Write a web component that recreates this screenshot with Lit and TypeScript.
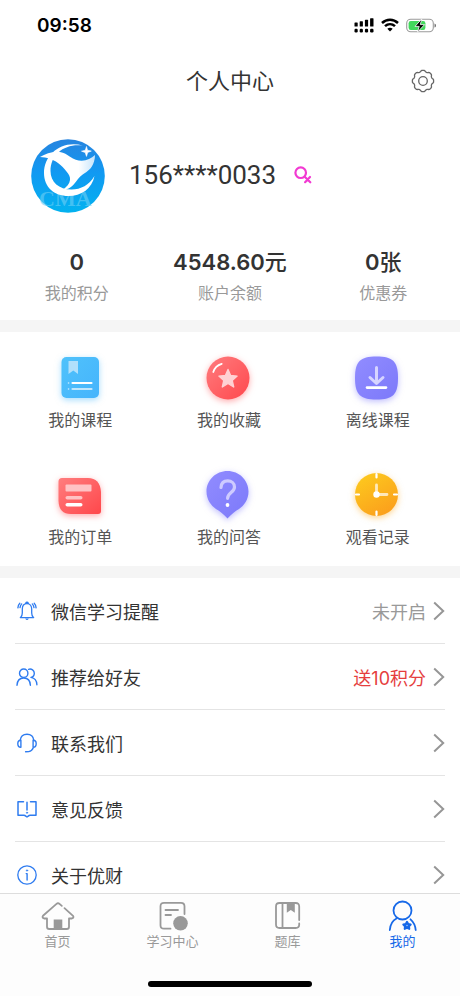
import { LitElement, html, css, svg, nothing, TemplateResult } from "lit";
import { customElement } from "lit/decorators.js";
import { classMap } from "lit/directives/class-map.js";

/** Outline of a cog with softly rounded teeth, centred on 12,12. */
const cogPath = (teeth: number, radius: number, depth: number): string => {
  const steps = 96;
  const points = Array.from({ length: steps }, (_, i) => {
    const a = (i / steps) * Math.PI * 2;
    const wave = Math.max(-0.9, Math.min(0.4, Math.cos(teeth * a)));
    const r = radius + depth * wave;
    return `${(12 + r * Math.sin(a)).toFixed(2)} ${(12 - r * Math.cos(a)).toFixed(2)}`;
  });
  return `M${points.join("L")}Z`;
};

const icons = {
  signal: svg`<svg width="20" height="15" viewBox="0 0 20 15" fill="#000" aria-hidden="true">
    <rect x="0.5" y="4.4" width="3.2" height="4.2" rx=".6"/><rect x="5.7" y="3.2" width="3.2" height="5.4" rx=".6"/>
    <rect x="10.9" y="1.8" width="3.2" height="6.8" rx=".6"/><rect x="16.1" y="0.2" width="3.4" height="8.4" rx=".6"/>
    <rect x="0.5" y="10.8" width="3.2" height="3.6" rx="1.2"/><rect x="5.7" y="10.8" width="3.2" height="3.6" rx="1.2"/>
    <rect x="10.9" y="10.8" width="3.2" height="3.6" rx="1.2"/><rect x="16.1" y="10.8" width="3.4" height="3.6" rx="1.2"/></svg>`,
  wifi: svg`<svg width="18" height="14" viewBox="0 0 18 14" fill="none" stroke="#000" stroke-width="2.5" aria-hidden="true">
    <path d="M1 5C5.6.6 12.400.6 17 5"/><path d="M4 8.200c2.900-2.700 7.100-2.700 10 0"/>
    <path d="M6.300 10.700Q9 8.600 11.700 10.700L9 13.600Z" fill="#000" stroke="none"/></svg>`,
  battery: svg`<svg width="31" height="15" viewBox="0 0 31 15" aria-hidden="true">
    <rect x=".7" y="1.200" width="26.600" height="12.600" rx="4" fill="#fff" stroke="#9b9b9b" stroke-width="1.100"/>
    <rect x="2.600" y="3.100" width="16.800" height="8.800" rx="2.200" fill="#42d85c"/>
    <path d="M28.600 5.400v4.200c1.700-.6 1.700-3.600 0-4.200z" fill="#555"/>
    <path d="M15.800.9 9 8.400h4.200l-1.700 5.700L18.600 6.600h-4.300z" fill="#000" stroke="#fff" stroke-width=".8"/></svg>`,
  gear: svg`<svg width="24" height="24" viewBox="0 0 24 24" fill="none" stroke="#666" stroke-width="1.300" stroke-linejoin="round" aria-hidden="true">
    <path d=${cogPath(8, 10.2, 1)}/><circle cx="12" cy="12" r="4.300"/></svg>`,
  logo: svg`<svg width="74" height="74" viewBox="0 0 74 74" role="img" aria-label="CMA">
    <defs><linearGradient id="sky" x1="0" y1="0" x2="0" y2="1"><stop offset="0" stop-color="#2784df"/><stop offset=".45" stop-color="#1199f2"/><stop offset="1" stop-color="#03b2ef"/></linearGradient>
    <linearGradient id="wing" x1="0" y1="0" x2="1" y2="0"><stop offset="0" stop-color="#fff"/><stop offset=".7" stop-color="#fff"/><stop offset="1" stop-color="#c6e4fb"/></linearGradient></defs>
    <circle cx="37" cy="37" r="36.800" fill="url(#sky)"/>
    <text x="8" y="67" class="mark">CMA</text>
    <path d="M52 6.500C31 .5 13 15 13 34c0 14 10 23 24.500 23C50 57 61 50 63.500 37 58 46 50 50.500 40.500 50.500 28 50.500 19.500 43 19.500 32 19.500 15 34 4 52 6.500Z" fill="#fff"/>
    <path d="M9 18C15 14.500 22 12 29 13c4 .8 7 2.600 10 4.700 4 2.800 7.500 4 11.700 4C56 21.500 60.500 19 64 16c0 4.500-1.200 8.500-3.300 11.700C57.500 32.500 53 34 49 37.700c-3 3-4.500 6-7 8.500-2.500 2.600-6 4.300-10.500 5C36 47.500 38.500 45 39 41c.4-3.200-1-5.800-3.300-8.300C33 29 30.500 26.500 27 24c-5.500-4-11-5.500-18-6Z" fill="url(#wing)"/>
    <path d="M55.500 7.500l1 3.700 3.800.9-3.600 1.300-1.200 4-1.300-3.900-3.700-1.300 3.800-1z" fill="#fff" stroke="#fff" stroke-width=".6"/></svg>`,
  female: svg`<svg width="18" height="18" viewBox="0 0 18 18" fill="none" stroke="#f23ad2" stroke-width="2.200" stroke-linecap="round" role="img" aria-label="女">
    <circle cx="6.700" cy="6.700" r="5.300"/><path d="m10.700 10.700 5.600 5.600M16 11l-4.900 5.200"/></svg>`,
  course: svg`<svg width="50" height="50" viewBox="0 0 50 50" class="blue" aria-hidden="true">
    <defs><linearGradient id="gb" x1="0" y1="0" x2="1" y2="1"><stop stop-color="#50c2fb"/><stop offset="1" stop-color="#45b4fc"/></linearGradient></defs>
    <rect x="6.500" y="4" width="37.500" height="41" rx="5" fill="url(#gb)"/>
    <path d="M13.500 8H23v13l-4.700-3.600L13.500 21z" fill="#b2e0fb"/>
    <g stroke="#fff" stroke-width="2.200" stroke-linecap="round"><path d="M17.500 30h19"/><path d="M17.500 36h19" opacity=".65"/><path d="M13.500 30h.1M13.500 36h.1" stroke-width="1.600" opacity=".7"/></g></svg>`,
  favorite: svg`<svg width="50" height="50" viewBox="0 0 50 50" class="red" aria-hidden="true">
    <defs><linearGradient id="gr" x1="0" y1="0" x2="1" y2="1"><stop stop-color="#ff7c7e"/><stop offset="1" stop-color="#ff484d"/></linearGradient></defs>
    <circle cx="24" cy="25" r="21.500" fill="url(#gr)"/>
    <path d="m24 16.500 2.600 6 6.500.6-4.900 4.400 1.500 6.500-5.700-3.500-5.700 3.500 1.500-6.500-4.900-4.400 6.500-.6z" fill="#ffd1d3" stroke="#ffd1d3" stroke-width="1.400" stroke-linejoin="round"/>
    <path d="M9.300 19q1.800-6.200 8.400-8.200" fill="none" stroke="#fff" stroke-width="1.800" stroke-linecap="round"/></svg>`,
  download: svg`<svg width="50" height="50" viewBox="0 0 50 50" class="violet" aria-hidden="true">
    <defs><linearGradient id="gv" x1="0" y1="0" x2="1" y2="1"><stop stop-color="#918cff"/><stop offset="1" stop-color="#7c79fa"/></linearGradient></defs>
    <path d="M23.500 3.500C40 3.500 45 8.500 45 25S40 46.500 23.500 46.500 2 41.500 2 25 7 3.500 23.500 3.500Z" fill="url(#gv)"/>
    <path d="M23.500 14.500v15M17 24.500l6.500 6 6.500-6" fill="none" stroke="#d6d4ff" stroke-width="3" stroke-linecap="round" stroke-linejoin="round"/>
    <path d="M14 34.600h19" stroke="#fff" stroke-width="2.600" stroke-linecap="round"/></svg>`,
  order: svg`<svg width="50" height="50" viewBox="0 0 50 50" class="red" aria-hidden="true">
    <defs><linearGradient id="go" x1="0" y1="0" x2="1" y2="1"><stop stop-color="#ff7d7e"/><stop offset="1" stop-color="#ff474b"/></linearGradient></defs>
    <path d="M7 8h26q12 0 13 14v19q0 3-3 3H16Q4 44 3.500 31V11.500Q3.500 8 7 8Z" fill="url(#go)"/>
    <rect x="10.500" y="14.500" width="26" height="7" rx="1" fill="#ffc2c4"/><rect x="10.500" y="26" width="17" height="3.600" rx="1.800" fill="#ffc2c4"/>
    <rect x="10.500" y="33" width="17" height="3.600" rx="1.800" fill="#fff"/></svg>`,
  question: svg`<svg width="50" height="50" viewBox="0 0 50 50" class="violet" aria-hidden="true">
    <defs><linearGradient id="gq" x1="0" y1="0" x2="1" y2="1"><stop stop-color="#918cff"/><stop offset="1" stop-color="#7c79fa"/></linearGradient></defs>
    <path d="M23.500 1C35 1 44.500 10 44.500 21.500c0 8-4.500 14-9.500 17.500-4 2-7.500 5.500-11.500 9.500-4-4-7.500-7.500-11.500-9.500-5-3.500-9.500-9.500-9.500-17.500C2.500 10 12 1 23.500 1Z" fill="url(#gq)"/>
    <path d="M17 17.500c.3-4.600 3-6.600 6.700-6.600 4 0 6.800 2.500 6.800 6 0 5.700-6.900 5.600-6.900 11.400" fill="none" stroke="#cecbff" stroke-width="3.200" stroke-linecap="round"/>
    <circle cx="23.500" cy="35" r="1.900" fill="#fff"/></svg>`,
  history: svg`<svg width="50" height="50" viewBox="0 0 50 50" class="amber" aria-hidden="true">
    <defs><linearGradient id="gh" x1=".2" y1="0" x2=".8" y2="1"><stop stop-color="#fdc91e"/><stop offset="1" stop-color="#fb9d1c"/></linearGradient></defs>
    <circle cx="23.500" cy="24.500" r="21.500" fill="url(#gh)"/>
    <g stroke="#fff" stroke-linecap="round"><path d="M23.500 4V7.500M23.500 41.500v3.500M3 24.500h3M41 24.500h3" stroke-width="2.200"/>
    <path d="M23.500 24.500V15M23.500 24.500H34" stroke-width="2.800" opacity=".7"/></g><circle cx="23.500" cy="24.500" r="3.200" fill="#fff"/></svg>`,
  bell: svg`<svg width="20" height="20" viewBox="0 0 20 20" class="line" aria-hidden="true">
    <path d="M3.300 16.600h13.400M3.600 16.500Q5.300 14.800 5.300 12V8.300C5.300 4.900 7.200 2.700 10 2.700s4.700 2.200 4.700 5.600V12q0 2.800 1.700 4.500M2.800 2.300Q1.100 4 .9 6.900M4.700 2.900Q3.400 4.200 3 6.600M17.200 2.300q1.700 1.700 1.900 4.600M15.300 2.900q1.300 1.300 1.700 3.700" stroke-width="1.300"/>
    <path d="M8.600 2.400q1.400-2.300 2.800 0z" fill="#2f7cf0"/><path d="M8.100 17.600h3.800q-1.900 3-3.800 0z" fill="#2f7cf0" stroke="none"/></svg>`,
  friends: svg`<svg width="22" height="20" viewBox="0 0 22 20" class="line" aria-hidden="true">
    <circle cx="7.700" cy="6.200" r="4.200"/><path d="M1 18.300C1.200 13.600 3.700 11 7.700 11s6.500 2.600 6.700 7.300"/>
    <path d="M12.600 2.300c3-.9 5.700 1.200 5.700 4 0 2.100-1.300 3.700-3.300 4.100 3.600.6 5.700 3.100 5.900 7.300"/></svg>`,
  headset: svg`<svg width="20" height="20" viewBox="0 0 20 20" class="line" aria-hidden="true">
    <path d="M3.200 7.400C3.700 3.400 6.500 1.300 10 1.300s6.300 2.100 6.800 6.100"/>
    <path d="M3.900 7.300C1.800 7.300.8 8.800.8 10.800s1 3.500 3.100 3.500zM16.100 7.300c2.100 0 3.100 1.500 3.100 3.500s-1 3.500-3.100 3.500zM16.400 14.400q-1.300 3.400-4.600 4.200l-3.200.1"/></svg>`,
  feedback: svg`<svg width="20" height="20" viewBox="0 0 20 20" class="line" aria-hidden="true">
    <path d="M6.500 2.700H1v13.500h5.800q1.300 0 2 1l1.200.8 1.200-.8q.7-1 2-1H19V2.700h-5.500M10 3.200v7.800" stroke-width="1.500"/>
    <circle cx="10" cy="13.700" r=".7" fill="#2f7cf0" stroke-width=".5"/></svg>`,
  info: svg`<svg width="20" height="20" viewBox="0 0 20 20" class="line" aria-hidden="true">
    <circle cx="10" cy="10" r="9.200" stroke-width="1.300"/><path d="M9.200 8.600h.9v6.400"/><circle cx="10" cy="5.500" r=".8" fill="#2f7cf0" stroke-width=".4"/></svg>`,
  chevron: svg`<svg width="12" height="20" viewBox="0 0 12 20" fill="none" stroke="#969696" stroke-width="2" aria-hidden="true"><path d="m1.200 1.500 9 8.500-9 8.500"/></svg>`,
  home: svg`<svg width="34" height="30" viewBox="0 0 34 30" class="tabline" aria-hidden="true">
    <path d="m20.800 4.900-2.300-2q-1.500-1.300-3 0L2 14.800q-1.300 1.900 1.100 2.700H6v8.200q0 2.300 2.300 2.300h17.400q2.300 0 2.300-2.300v-8.200h2.900q2.400-.8 1.100-2.700l-8.500-7.600"/>
    <path d="M12.700 18.600h8.600V29h-8.600z" fill="currentColor" stroke="none"/></svg>`,
  study: svg`<svg width="30" height="30" viewBox="0 0 30 30" class="tabline" aria-hidden="true">
    <path d="M12.500 27.700H6q-3.500 0-3.500-3.500V5.300q0-3.500 3.500-3.500h17q3.500 0 3.500 3.500V13"/><path d="M7.500 9H20M7.500 14H13"/>
    <circle cx="22.500" cy="22.300" r="7.300" fill="currentColor" stroke="none"/></svg>`,
  bank: svg`<svg width="30" height="30" viewBox="0 0 30 30" class="tabline" aria-hidden="true">
    <path d="M26.200 19V5.500q0-3.500-3.500-3.500H6.500Q3 2 3 5.500v18Q3 27 6.500 27h16.200q3.500 0 3.500-3.500v-1M9.500 2v25"/>
    <path d="M13.800 2.500h8v9.300l-4-2.700-4 2.700z" fill="currentColor" stroke="none"/></svg>`,
  mine: svg`<svg width="30" height="32" viewBox="0 0 30 32" class="tabline" aria-hidden="true">
    <circle cx="14.500" cy="10.500" r="9"/><path d="M8.500 18.500Q2.500 21.500 1.800 30M22.500 19.300q4.700 4.200 5.200 10.700"/>
    <path d="m19 21.800 1.200 2.200 2.500.5-1.700 1.900.3 2.500-2.300-1-2.300 1 .3-2.500-1.700-1.900 2.500-.5z" fill="currentColor" stroke-width="2"/>
    <circle cx="19" cy="25.500" r=".8" fill="#9cc4fa" stroke="none"/></svg>`,
};
type IconName = keyof typeof icons;

interface Row { label: string; icon: IconName; note?: string; hot?: boolean }

const stats = [
  { value: "0", unit: "", label: "我的积分" },
  { value: "4548.60", unit: "元", label: "账户余额" },
  { value: "0", unit: "张", label: "优惠券" },
];
const shortcuts: { label: string; icon: IconName }[] = [
  { label: "我的课程", icon: "course" },
  { label: "我的收藏", icon: "favorite" },
  { label: "离线课程", icon: "download" },
  { label: "我的订单", icon: "order" },
  { label: "我的问答", icon: "question" },
  { label: "观看记录", icon: "history" },
];
const rows: Row[] = [
  { label: "微信学习提醒", icon: "bell", note: "未开启" },
  { label: "推荐给好友", icon: "friends", note: "送10积分", hot: true },
  { label: "联系我们", icon: "headset" },
  { label: "意见反馈", icon: "feedback" },
  { label: "关于优财", icon: "info" },
];
const tabs: { label: string; icon: IconName; active?: boolean }[] = [
  { label: "首页", icon: "home" },
  { label: "学习中心", icon: "study" },
  { label: "题库", icon: "bank" },
  { label: "我的", icon: "mine", active: true },
];

@customElement("app-root")
export class AppRoot extends LitElement {
  static styles = css`
    :host {
      display: flex; flex-direction: column; height: 100vh; overflow: hidden;
      background: #fff; color: #333;
      font-family: Inter, "Noto Sans CJK SC", sans-serif;
    }
    * { box-sizing: border-box; }
    svg { display: block; flex: none; }
    a { color: inherit; text-decoration: none; }
    .status { flex: none; display: flex; align-items: center; justify-content: space-between; height: 50px; padding: 0 23px 0 37px; }
    .clock { font-size: 19px; font-weight: 600; line-height: 25px; color: #000; }
    .signals { display: flex; align-items: center; gap: 7px; }
    .nav { flex: none; display: grid; grid-template-columns: 1fr auto 1fr; align-items: center; height: 62px; padding: 0 25px; }
    .title { grid-column: 2; margin: 0; font-size: 22px; font-weight: 400; line-height: 32px; }
    .settings { justify-self: end; border: 0; padding: 0; background: none; cursor: pointer; }
    .content { flex: 1; min-height: 0; overflow: hidden; }
    .profile { display: flex; align-items: center; gap: 24px; padding: 27px 31px 0; }
    .mark { font: 700 22px "Liberation Serif", serif; fill: #6fd0f5; fill-opacity: .6; }
    .user { display: flex; align-items: center; gap: 18px; padding-bottom: 2px; font-family: Roboto, sans-serif; font-size: 26px; line-height: 32px; }
    .stats { display: grid; grid-template-columns: repeat(3, 1fr); margin: 0; padding: 32px 0 13px; text-align: center; }
    .stat { display: flex; flex-direction: column-reverse; }
    .value { margin: 0; font-size: 22px; font-weight: 600; line-height: 34px; }
    .unit { font-weight: 500; }
    .caption { font-size: 16px; line-height: 28px; color: #999; }
    .band { height: 12px; background: #f5f5f5; }
    .shortcuts { display: grid; grid-template-columns: repeat(3, 1fr); row-gap: 38px; padding: 21px 8px 17px 6px; }
    .shortcut { display: flex; flex-direction: column; align-items: center; gap: 5px; font-size: 16px; line-height: 24px; color: #555; }
    .blue { filter: drop-shadow(0 2px 3px #4bbafc80); }
    .red { filter: drop-shadow(0 2px 3px #ff5a5e80); }
    .violet { filter: drop-shadow(0 2px 3px #817dfc80); }
    .amber { filter: drop-shadow(0 2px 3px #fca92080); }
    .rows { list-style: none; margin: 0; padding: 0 15px; }
    .row { display: flex; align-items: center; height: 66px; font-size: 18px; border-bottom: 1px solid #e4e4e4; }
    .rowicon { display: flex; justify-content: center; width: 24px; margin-right: 12px; }
    .note { margin-left: auto; margin-right: 7px; color: #999; }
    .hot { color: #e53e3e; }
    .tail { margin-left: auto; }
    .note + .tail { margin-left: 0; }
    .line { fill: none; stroke: #2f7cf0; stroke-width: 1.4; stroke-linecap: round; stroke-linejoin: round; }
    .tabs { flex: none; border-top: 1px solid #ddd; background: #fdfdfd; }
    .tablist { display: grid; grid-template-columns: repeat(4, 1fr); padding-top: 6px; }
    .tab { display: flex; flex-direction: column; align-items: center; font-size: 13px; line-height: 18px; color: #999; }
    .tabicon { display: flex; align-items: center; height: 32px; }
    .active { color: #1769e8; }
    .tabline { fill: none; stroke: currentColor; stroke-width: 1.8; stroke-linecap: round; stroke-linejoin: round; }
    .homebar { width: 164px; height: 6px; margin: 31px auto 9px; border-radius: 3px; background: #000; }
  `;

  private row({ label, icon, note, hot }: Row): TemplateResult {
    return html`<li><a class="row" href="#">
      <span class="rowicon">${icons[icon]}</span><span>${label}</span>
      ${note ? html`<span class=${classMap({ note: true, hot: !!hot })}>${note}</span>` : nothing}
      <span class="tail">${icons.chevron}</span>
    </a></li>`;
  }

  render() {
    return html`
      <div class="status"><span class="clock">09:58</span>
        <span class="signals">${icons.signal}${icons.wifi}${icons.battery}</span></div>
      <header class="nav"><h1 class="title">个人中心</h1>
        <button class="settings" aria-label="设置">${icons.gear}</button></header>
      <main class="content">
        <section class="profile">${icons.logo}<span class="user">156****0033 ${icons.female}</span></section>
        <dl class="stats">${stats.map((s) => html`<div class="stat"><dt class="caption">${s.label}</dt><dd class="value">${s.value}<span class="unit">${s.unit}</span></dd></div>`)}</dl>
        <div class="band"></div>
        <nav class="shortcuts">${shortcuts.map((s) => html`<a class="shortcut" href="#">${icons[s.icon]}<span>${s.label}</span></a>`)}</nav>
        <div class="band"></div>
        <ul class="rows">${rows.map((r) => this.row(r))}</ul>
      </main>
      <footer class="tabs">
        <nav class="tablist">${tabs.map((t) => html`<a class=${classMap({ tab: true, active: !!t.active })} href="#">
          <span class="tabicon">${icons[t.icon]}</span><span>${t.label}</span></a>`)}</nav>
        <div class="homebar"></div>
      </footer>`;
  }
}
